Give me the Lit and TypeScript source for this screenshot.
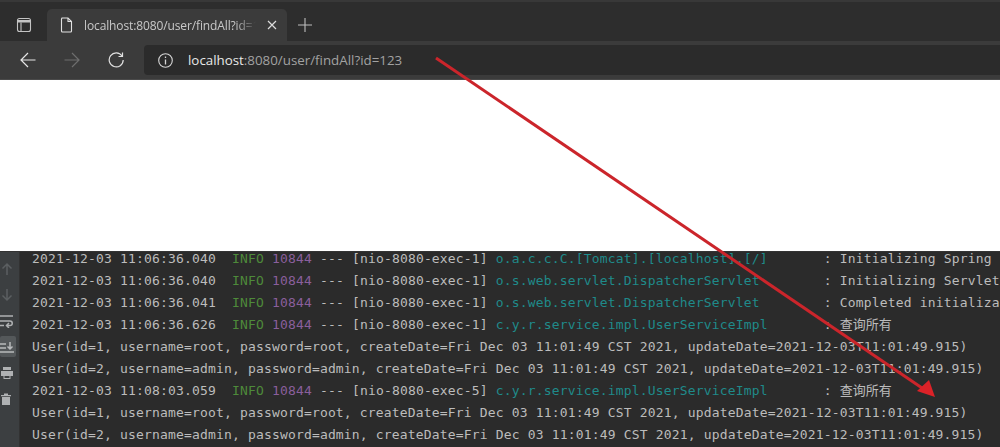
import { LitElement, html, css, svg } from "lit";
import { customElement } from "lit/decorators.js";

type Row = { ts: string; thread: string; logger: string; msg: string } | { plain: string };

const u1 = "User(id=1, username=root, password=root, createDate=Fri Dec 03 11:01:49 CST 2021, updateDate=2021-12-03T11:01:49.915)";
const u2 = "User(id=2, username=admin, password=admin, createDate=Fri Dec 03 11:01:49 CST 2021, updateDate=2021-12-03T11:01:49.915)";
const rows: Row[] = [
  { ts: "2021-12-03 11:06:36.040", thread: "1", logger: "o.a.c.c.C.[Tomcat].[localhost].[/]", msg: "Initializing Spring" },
  { ts: "2021-12-03 11:06:36.040", thread: "1", logger: "o.s.web.servlet.DispatcherServlet", msg: "Initializing Servlet" },
  { ts: "2021-12-03 11:06:36.041", thread: "1", logger: "o.s.web.servlet.DispatcherServlet", msg: "Completed initializa" },
  { ts: "2021-12-03 11:06:36.626", thread: "1", logger: "c.y.r.service.impl.UserServiceImpl", msg: "查询所有" },
  { plain: u1 },
  { plain: u2 },
  { ts: "2021-12-03 11:08:03.059", thread: "5", logger: "c.y.r.service.impl.UserServiceImpl", msg: "查询所有" },
  { plain: u1 },
  { plain: u2 },
];

@customElement("app-root")
export class AppRoot extends LitElement {
  static styles = css`
    :host { display: block; width: 1000px; height: 447px; position: relative; overflow: hidden; background: #fff; }
    .browser { display: flex; flex-direction: column; height: 80px; background: #2d2d2d; }
    .tabstrip { display: flex; align-items: flex-end; height: 41px; box-sizing: border-box; padding-left: 16px; border-top: 2px solid #383838; }
    .tabicon { width: 31px; height: 32px; display: flex; align-items: center; box-sizing: border-box; }
    .tab { width: 240px; height: 32px; background: #3b3b3b; border-radius: 5px 5px 0 0; display: flex; align-items: center; padding-left: 13px; box-sizing: border-box; color: #c8c8c8; font: 12px "Open Sans", "Noto Sans", sans-serif; }
    .tab .title { margin-left: 11px; width: 172px; white-space: nowrap; overflow: hidden; -webkit-mask-image: linear-gradient(to right, #000 88%, transparent 100%); mask-image: linear-gradient(to right, #000 88%, transparent 100%); letter-spacing: -0.12px; }
    .tab .close { margin-left: 11px; display: flex; }
    .newtab { margin-left: 10px; height: 32px; display: flex; align-items: center; }
    .toolbar { flex: 1; display: flex; align-items: center; background: #3b3b3b; padding-left: 20px; border-bottom: 1px solid #4a4a4a; }
    .nav { display: flex; gap: 28px; align-items: center; }
    .nav svg { display: block; }
    .url { margin-left: 20px; flex: 1; height: 30px; background: #2b2b2b; border-radius: 4px 0 0 4px; display: flex; align-items: center; padding-left: 14px; box-sizing: border-box; font: 13.33px "Open Sans", "Noto Sans", sans-serif; color: #a2a2a2; }
    .url svg { margin-right: 15px; }
    .url b { font-weight: 400; color: #e8e8e8; }
    .page { height: 171px; background: #fff; }
    .console { height: 196px; display: flex; background: #2b2b2b; border-top: 1px solid #333; box-sizing: border-box; overflow: hidden; }
    .side { width: 20px; flex: none; background: #3c3f41; border-right: 1px solid #323232; display: flex; flex-direction: column; align-items: flex-start; padding-top: 6px; box-sizing: border-box; }
    .btn { width: 16px; height: 21px; margin-bottom: 5px; display: flex; align-items: center; justify-content: flex-start; border-radius: 2px; }
    .btn.on { background: #54585a; }
    .log { flex: 1; min-width: 0; padding-left: 12px; margin-top: -4px; font: 13px/22px "DejaVu Sans Mono", "Noto Sans CJK SC", monospace; letter-spacing: 0.17px; color: #bcbcbc; overflow: hidden; }
    .row { white-space: pre; height: 22px; }
    .info { color: #4e8a3a; }
    .pid { color: #8a5f9c; }
    .logger { color: #1f8a8a; }
    .cjk { font-family: "Noto Sans CJK SC", sans-serif; letter-spacing: 0; line-height: 1; }
    .arrow { position: absolute; left: 0; top: 0; pointer-events: none; }
  `;

  private renderRow(r: Row) {
    if ("plain" in r) return html`<div class="row">${r.plain}</div>`;
    const isCjk = /[^\x00-\x7f]/.test(r.msg);
    return html`<div class="row">${r.ts}  <span class="info">INFO</span> <span class="pid">10844</span> --- [nio-8080-exec-${r.thread}] <span class="logger">${r.logger.padEnd(40, " ")}</span> : <span class=${isCjk ? "cjk" : ""}>${r.msg}</span></div>`;
  }

  render() {
    return html`
      <div class="browser">
        <div class="tabstrip">
          <div class="tabicon">
            <svg width="16" height="16" viewBox="0 0 16 16" fill="none" stroke="#c4c4c4" stroke-width="1.1"><rect x="1.500" y="1.500" width="13" height="13" rx="2"/><path d="M5 5.500V14.500"/><path d="M2 3h12v2.500H2z" fill="#c4c4c4" stroke="none"/></svg>
          </div>
          <div class="tab">
            <svg width="13" height="16" viewBox="0 0 13 16" fill="none" stroke="#e2e2e2" stroke-width="1.1"><path d="M1.500 1H8l3.500 3.500V14a1 1 0 0 1-1 1h-8a1 1 0 0 1-1-1V2a1 1 0 0 1 1-1z"/><path d="M8 1v3.500h3.500"/></svg>
            <span class="title">localhost:8080/user/findAll?id=1</span>
            <span class="close"><svg width="10" height="10" viewBox="0 0 10 10" stroke="#dcdcdc" stroke-width="1.2"><path d="M1 1l8 8M9 1l-8 8"/></svg></span>
          </div>
          <div class="newtab"><svg width="16" height="16" viewBox="0 0 16 16" stroke="#bdbdbd" stroke-width="1.1"><path d="M8 1v14M1 8h14"/></svg></div>
        </div>
        <div class="toolbar">
          <div class="nav">
            <svg width="16" height="16" viewBox="0 0 16 16" fill="none" stroke="#e6e6e6" stroke-width="1.2"><path d="M0.500 8h15M8 1L1 8l7 7"/></svg>
            <svg width="16" height="16" viewBox="0 0 16 16" fill="none" stroke="#6e6e6e" stroke-width="1.2"><path d="M0.500 8h15M8 1l7 7-7 7"/></svg>
            <svg width="16" height="16" viewBox="0 0 16 16" fill="none" stroke="#e0e0e0" stroke-width="1.2"><path d="M14 4A7 7 0 1 0 15.200 8"/><path d="M14.500 0.500v4h-4"/></svg>
          </div>
          <div class="url">
            <svg width="15" height="15" viewBox="0 0 15 15" fill="none" stroke="#d6d6d6" stroke-width="1.1"><circle cx="7.500" cy="7.500" r="6.800"/><path d="M7.500 6.500v5M7.500 3.500v1.400" stroke-width="1.300"/></svg>
            <span><b>localhost</b>:8080/user/findAll?id=123</span>
          </div>
        </div>
      </div>
      <div class="page"></div>
      <div class="console">
        <div class="side">
          <div class="btn"><svg width="14" height="14" viewBox="0 0 14 14" fill="none" stroke="#5b5f61" stroke-width="1.5"><path d="M7 13V2M2.500 6.500L7 2l4.500 4.500"/></svg></div>
          <div class="btn"><svg width="14" height="14" viewBox="0 0 14 14" fill="none" stroke="#5b5f61" stroke-width="1.5"><path d="M7 1v11M2.500 7.500L7 12l4.500-4.500"/></svg></div>
          <div class="btn"><svg width="14" height="14" viewBox="0 0 14 14" fill="none" stroke="#afb1b3" stroke-width="1.500"><path d="M0 2h13M0 7h10a2 2 0 0 1 0 4.500H7M0 11.500h4M9 9l-2.500 2.500L9 14"/></svg></div>
          <div class="btn on"><svg width="14" height="14" viewBox="0 0 14 14" fill="none" stroke="#b8babc" stroke-width="1.500"><path d="M0 4h6M0 8h6M0 12h14M10 2v7M7.500 6.500L10 9l2.500-2.500"/></svg></div>
          <div class="btn"><svg width="14" height="14" viewBox="0 0 14 14"><path d="M3 1h8v3H3zM1 5h12v5H1zM3.500 9h7v4h-7z" fill="#afb1b3"/><path d="M4.500 10h5v2h-5z" fill="#3c3f41"/></svg></div>
          <div class="btn"><svg width="12" height="14" viewBox="0 0 12 14"><path d="M1 3h10v1.200H1zM4 1.500h4V3H4zM2 5h8v8H2z" fill="#afb1b3"/></svg></div>
        </div>
        <div class="log">${rows.map((r) => this.renderRow(r))}</div>
      </div>
      <svg class="arrow" width="1000" height="447" viewBox="0 0 1000 447">
        ${svg`<path d="M436 58L925 390" stroke="#cb252b" stroke-width="3" fill="none"/><path d="M935 397L917 391L929 380Z" fill="#dc2228"/>`}
      </svg>
    `;
  }
}
